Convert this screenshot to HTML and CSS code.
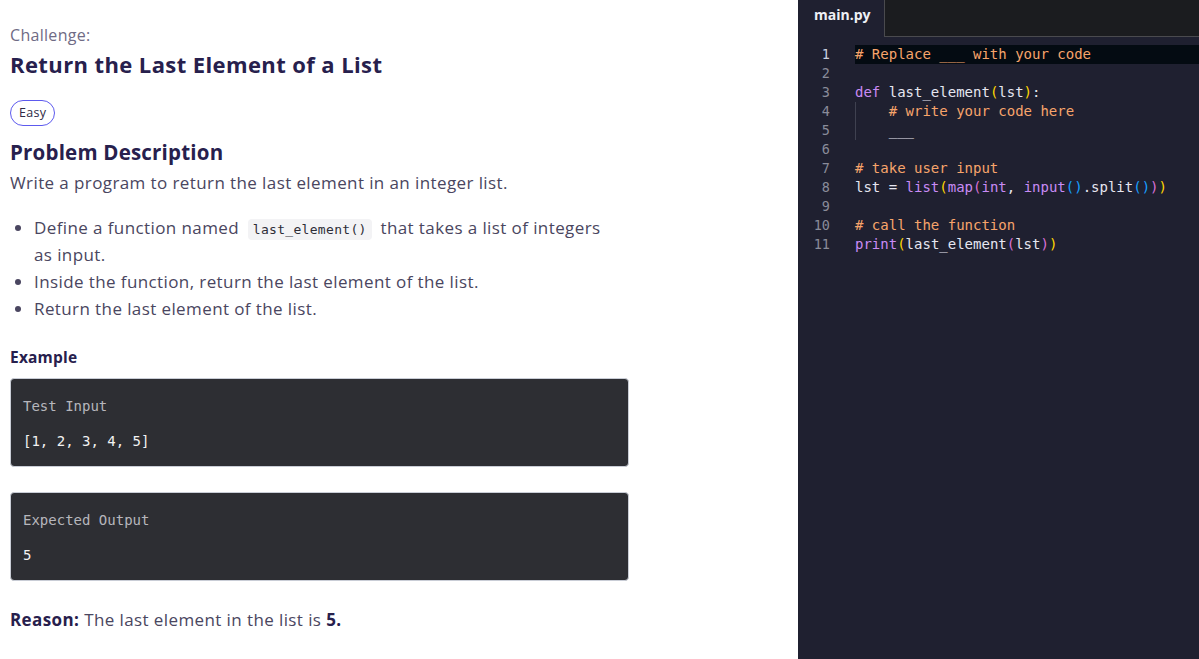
FILE: index.html
```html
<!DOCTYPE html>
<html>
<head>
<meta charset="utf-8">
<link rel="stylesheet" href="styles.css">
</head>
<body>
<div class="app">
  <main class="problem">
    <div class="label">Challenge:</div>
    <h1 class="title">Return the Last Element of a List</h1>
    <span class="badge">Easy</span>
    <h2 class="h2">Problem Description</h2>
    <p class="lead">Write a program to return the last element in an integer list.</p>
    <ul class="bullets">
      <li>Define a function named <code class="inline">last_element()</code> that takes a list of integers as input.</li>
      <li>Inside the function, return the last element of the list.</li>
      <li>Return the last element of the list.</li>
    </ul>
    <h3 class="h3">Example</h3>
    <div class="box">
      <div class="box-label">Test Input</div>
      <div class="box-value">[1, 2, 3, 4, 5]</div>
    </div>
    <div class="box">
      <div class="box-label">Expected Output</div>
      <div class="box-value">5</div>
    </div>
    <p class="reason"><b>Reason:</b> The last element in the list is <b>5.</b></p>
  </main>
  <section class="editor">
    <div class="tabs">
      <div class="tab">main.py</div>
      <div class="tab-rest"></div>
    </div>
    <div class="code">
      <div class="ln active"><span class="num">1</span><span class="src hl"><span class="c"># Replace ___ with your code</span></span></div>
      <div class="ln"><span class="num">2</span><span class="src"></span></div>
      <div class="ln"><span class="num">3</span><span class="src"><span class="k">def</span> last_element<span class="b1">(</span>lst<span class="b1">)</span>:</span></div>
      <div class="ln"><span class="num">4</span><span class="src guide">    <span class="c"># write your code here</span></span></div>
      <div class="ln"><span class="num">5</span><span class="src guide">    ___</span></div>
      <div class="ln"><span class="num">6</span><span class="src"></span></div>
      <div class="ln"><span class="num">7</span><span class="src"><span class="c"># take user input</span></span></div>
      <div class="ln"><span class="num">8</span><span class="src">lst = <span class="k">list</span><span class="b1">(</span><span class="k">map</span><span class="b2">(</span><span class="k">int</span>, <span class="k">input</span><span class="b3">()</span>.split<span class="b3">()</span><span class="b2">)</span><span class="b1">)</span></span></div>
      <div class="ln"><span class="num">9</span><span class="src"></span></div>
      <div class="ln"><span class="num">10</span><span class="src"><span class="c"># call the function</span></span></div>
      <div class="ln"><span class="num">11</span><span class="src"><span class="k">print</span><span class="b1">(</span>last_element<span class="b2">(</span>lst<span class="b2">)</span><span class="b1">)</span></span></div>
    </div>
  </section>
</div>
</body>
</html>
```
FILE: styles.css
```css
* { box-sizing: border-box; }
html, body { margin: 0; padding: 0; height: 100%; }
body { font-family: "Open Sans", "Lato", sans-serif; background: #fff; }
.app { display: flex; height: 659px; overflow: hidden; }
.problem { width: 798px; flex: none; padding: 24px 0 0 10px; }
.problem > * { width: 620px; }
.label { font-size: 16px; color: #6f6b85; line-height: 22px; letter-spacing: 0.3px; }
.title { margin: 2px 0 0; font-size: 22px; font-weight: 700; color: #27204d; line-height: 32px; letter-spacing: 0.4px; }
.badge { display: inline-block; width: auto; margin-top: 20px; border: 1.5px solid #5d5aee; border-radius: 13px; padding: 0 8px; height: 26px; line-height: 23px; font-size: 12.5px; color: #2e2a45; letter-spacing: 0.3px; }
.h2 { margin: 11px 0 0; font-size: 20.5px; font-weight: 700; color: #27204d; line-height: 30px; letter-spacing: 0.2px; }
.lead { margin: 3px 0 0; font-size: 17px; color: #4a4660; line-height: 26px; letter-spacing: 0.4px; }
.problem > .bullets { width: 612px; margin: 18px 0 0; padding-left: 24px; font-size: 17px; color: #4a4660; line-height: 27px; letter-spacing: 0.4px; }
.inline { font-family: "DejaVu Sans Mono", monospace; font-size: 13px; line-height: 1; background: #f3f3f5; color: #2e2e38; padding: 3px 5px; margin: 0 4px; border-radius: 4px; letter-spacing: 0.3px; }
.h3 { margin: 24px 0 0; font-size: 15.5px; font-weight: 700; color: #27204d; line-height: 22px; letter-spacing: 0.2px; }
.box { margin-top: 10px; width: 619px; height: 89px; background: #2d2e33; border: 1px solid #c9cdd6; border-radius: 4px; padding: 17px 12px 0; font-family: "DejaVu Sans Mono", monospace; font-size: 14px; }
.box + .box { margin-top: 25px; }
.box-label { color: #b6b6bc; line-height: 20px; }
.box-value { color: #f2f2f2; margin-top: 15px; line-height: 20px; }
.reason { margin: 27px 0 0; font-size: 17px; color: #4a4660; line-height: 24px; letter-spacing: 0.4px; }
.reason b { color: #27204d; }

.editor { flex: 1; background: #1f2030; display: flex; flex-direction: column; }
.tabs { display: flex; height: 37px; }
.tab { width: 86px; flex: none; padding: 5px 0 0 16px; color: #eef0f5; font-family: "Open Sans", sans-serif; font-weight: 700; font-size: 14px; }
.tab-rest { flex: 1; background: #1b1c1f; border-left: 1px solid #4a4a4e; border-bottom: 1px solid #4a4a4e; }
.code { padding-top: 8px; font-family: "DejaVu Sans Mono", monospace; font-size: 14px; }
.ln { display: flex; height: 19px; line-height: 19px; }
.num { width: 32px; flex: none; text-align: right; color: #8a8c9a; font-size: 13.5px; }
.ln.active .num { color: #c9d1e0; }
.src { margin-left: 25px; flex: 1; white-space: pre; color: #e6e6f0; }
.src.hl { background: #040b12; }
.src.guide { background: linear-gradient(#3f4150, #3f4150) no-repeat 0 0 / 1px 100%; }
.c { color: #f7a46b; }
.k { color: #c98bf5; }
.b1 { color: #ffd700; }
.b2 { color: #da70d6; }
.b3 { color: #179fff; }
```
